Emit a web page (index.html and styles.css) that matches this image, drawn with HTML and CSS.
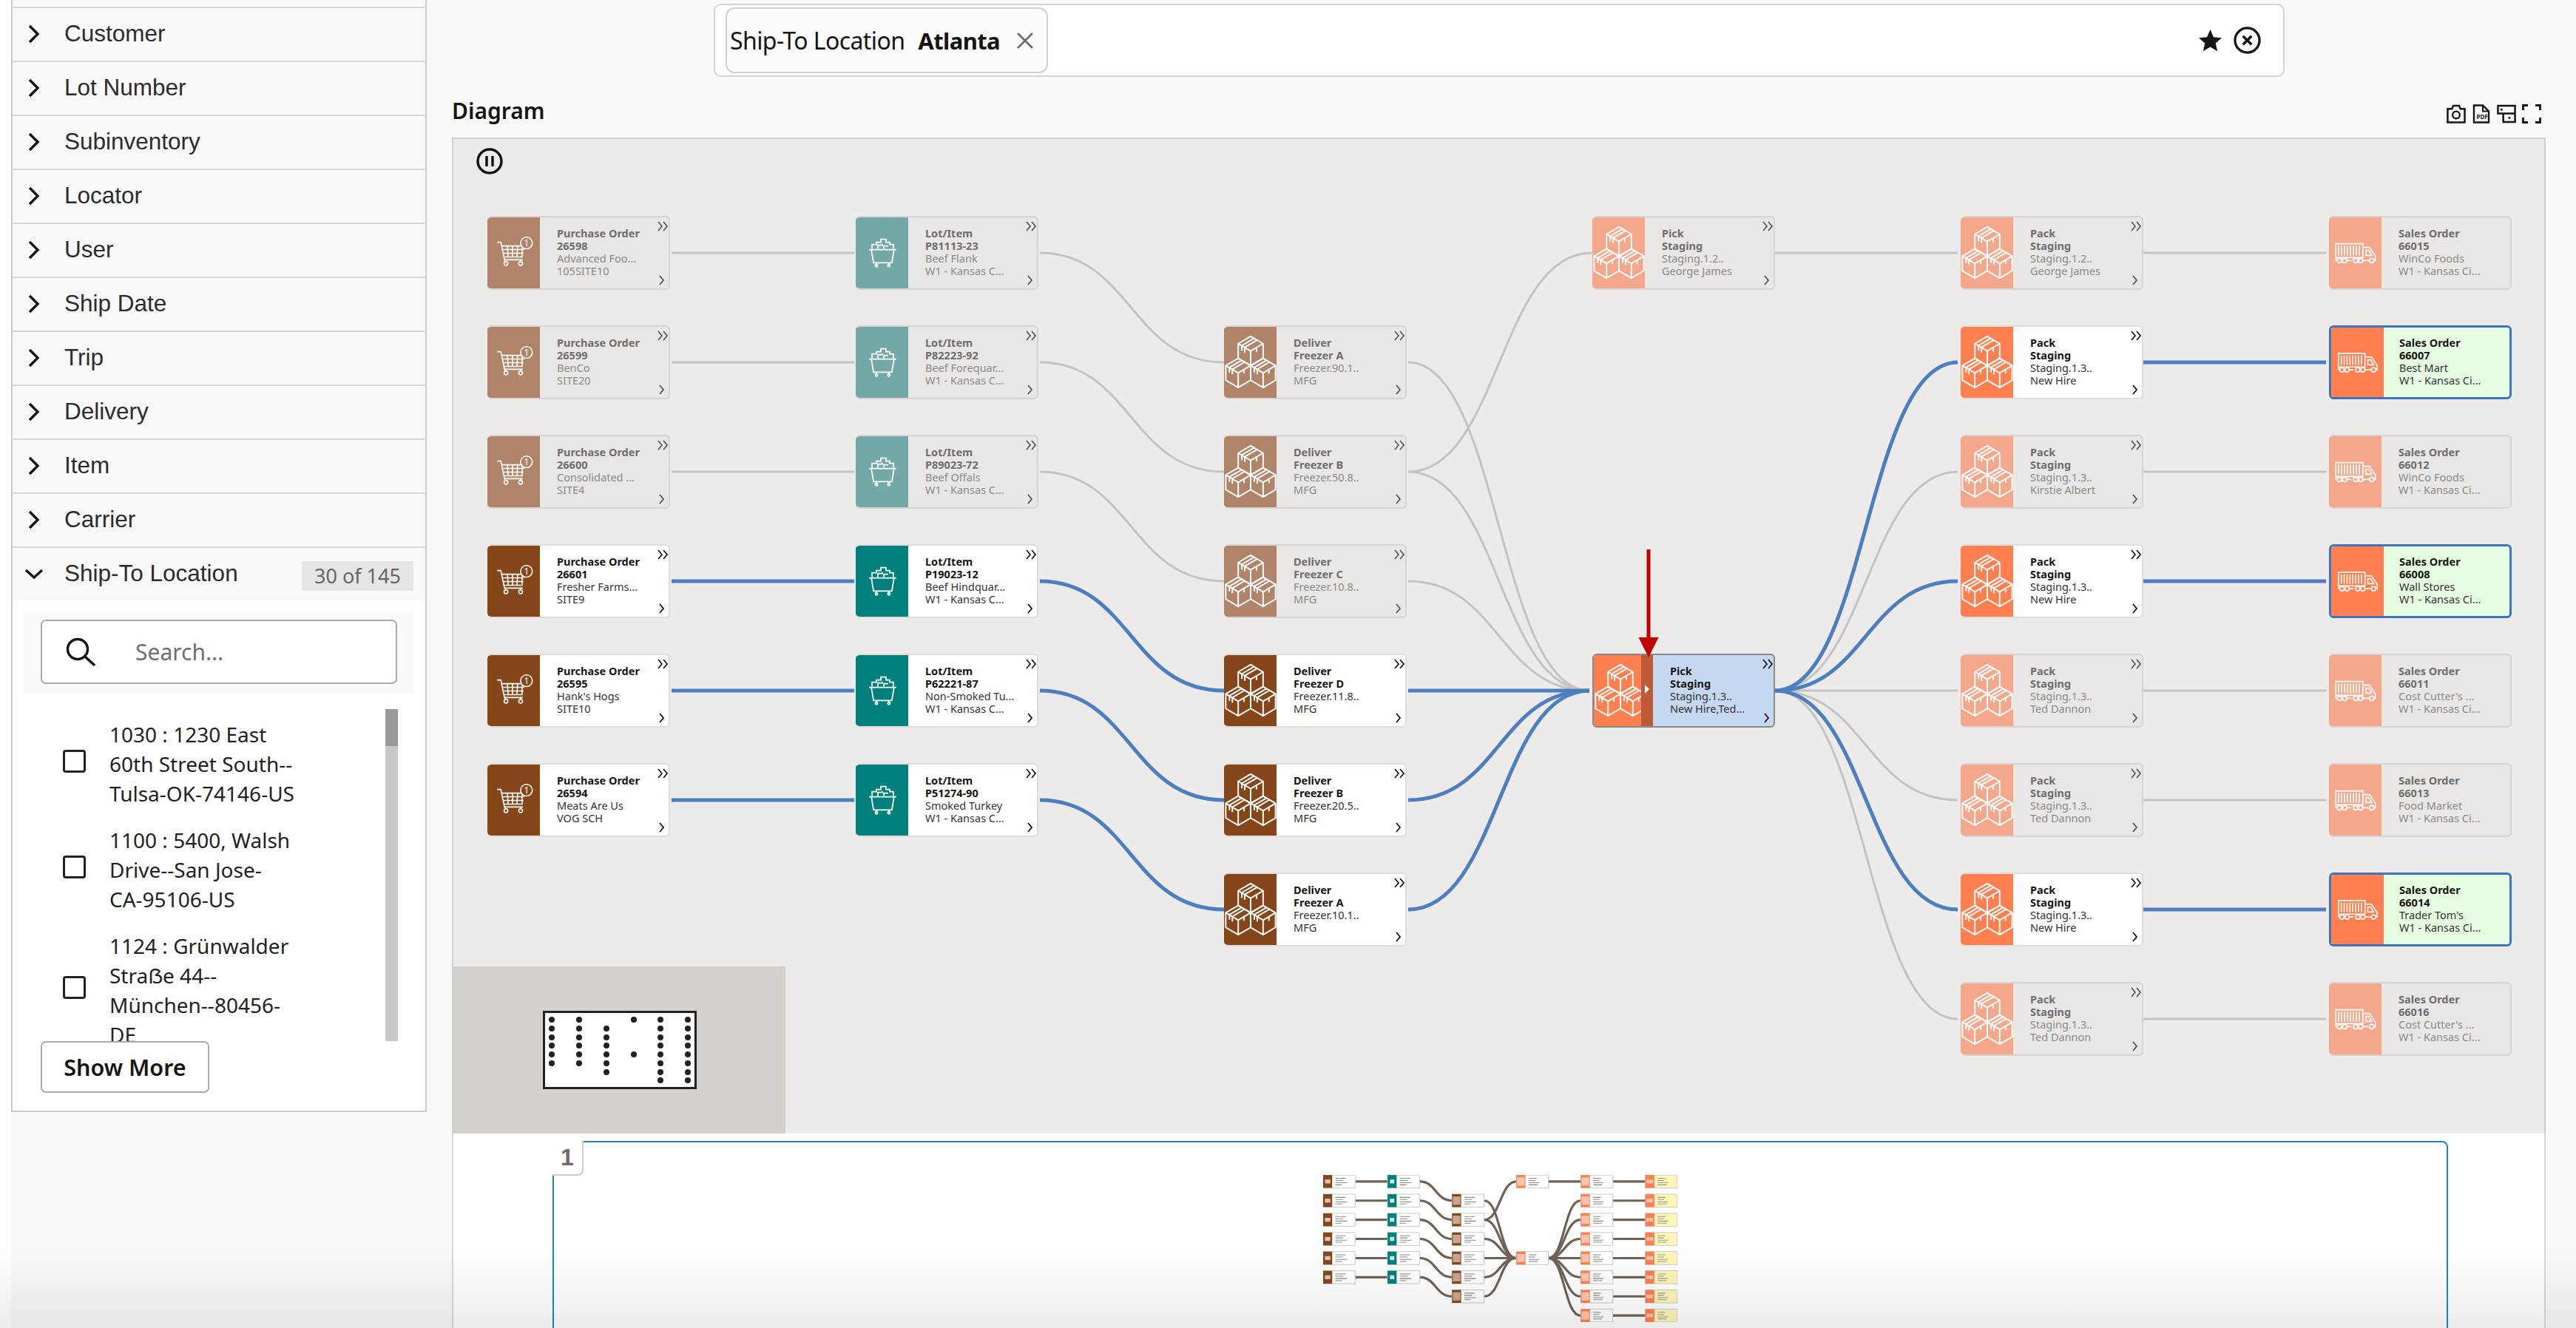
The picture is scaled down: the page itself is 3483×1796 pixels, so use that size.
FILE: index.html
```html
<!DOCTYPE html>
<html lang="en">
<head>
  <meta charset="UTF-8" />
  <title>Diagram</title>
  <link rel="stylesheet" href="styles.css">
</head>
<body>
  <!-- shared icons -->
  <svg class="defs" width="0" height="0">
    <defs>
      <symbol id="i-cart" viewBox="0 0 71 97">
        <g fill="none" stroke="#fff" stroke-width="1.6">
          <path d="M13 34h5l5 24h25"/>
          <path d="M19 39h28v15H22M20 44h30M21 49h28M27 39l1 15M34 39v15M41 39l-1 15"/>
          <path d="M23 58l2 3M46 58l-2 3"/>
          <circle cx="25" cy="63" r="2.6"/><circle cx="45" cy="63" r="2.6"/>
          <circle cx="53" cy="35" r="8" fill="var(--tile)"/>
        </g>
        <text x="53" y="39.5" class="cart-n">1</text>
      </symbol>
      <symbol id="i-bin" viewBox="0 0 71 97">
        <g fill="none" stroke="#fff" stroke-width="1.8">
          <path d="M18 44h37M21 44l3 18h25l3-18M28 62v3M45 62v3"/>
          <circle cx="28" cy="66" r="1.6"/><circle cx="45" cy="66" r="1.6"/>
          <path d="M22 43v-6h6v-3h6v-4h7v4h5v3h5v6M30 43v-5h6v-2M38 43v-4h6"/>
        </g>
      </symbol>
      <g id="cube" fill="none" stroke="#fff" stroke-width="2" stroke-linejoin="round">
        <path d="M0 0l17 10v20L0 40l-17-10V10zM-17 10L0 20l17-10M0 20v20"/>
        <path d="M9 5L-8 15v7M5 2.500L-12 12.500v7M8 15v6"/>
      </g>
      <symbol id="i-boxes" viewBox="0 0 71 97">
        <use href="#cube" x="36" y="13"/>
        <use href="#cube" x="19" y="43"/>
        <use href="#cube" x="53" y="43"/>
      </symbol>
      <symbol id="i-truck" viewBox="0 0 71 97">
        <g fill="none" stroke="#fff" stroke-width="1.7">
          <path d="M9 36h37v19H9zM13 39v13M17 39v13M21 39v13M25 39v13M29 39v13M33 39v13M37 39v13M41 39v13"/>
          <path d="M9 59V55M46 59h8M47 41h8l8 12v6h-2M50 45h4l4 7h-8z"/>
          <path d="M24 59h6M9 59h1"/>
          <circle cx="14" cy="59" r="3"/><circle cx="21" cy="59" r="3"/><circle cx="36" cy="59" r="3"/><circle cx="43" cy="59" r="3"/><circle cx="58" cy="59" r="3"/>
        </g>
      </symbol>
      <symbol id="i-dbl" viewBox="0 0 16 14">
        <path d="M2 1l5 6-5 6M9 1l5 6-5 6" fill="none" stroke="currentColor" stroke-width="1.7"/>
      </symbol>
      <symbol id="i-one" viewBox="0 0 10 14">
        <path d="M2 1l5 6-5 6" fill="none" stroke="currentColor" stroke-width="1.8"/>
      </symbol>
      <symbol id="i-chev" viewBox="0 0 16 26">
        <path d="M2 2l11 11L2 24" fill="none" stroke="#161513" stroke-width="3.4"/>
      </symbol>

      <!-- links, drawn in canvas coordinates -->
      <g id="l-gray">
        <path d="M249 50H496"/><path d="M249 198H496"/><path d="M249 346H496"/>
        <path d="M747 50C870 50 870 198 996 198"/><path d="M747 198C870 198 870 346 996 346"/><path d="M747 346C870 346 870 494 996 494"/>
        <path d="M1245 198C1368 198 1368 642 1490 642"/><path d="M1245 346C1368 346 1368 642 1490 642"/><path d="M1245 494C1368 494 1368 642 1490 642"/>
        <path d="M1245 346C1368 346 1368 50 1493 50"/>
        <path d="M1741 50H1988"/><path d="M2239 50H2486"/>
        <path d="M1741 642C1864 642 1864 346 1988 346"/><path d="M1741 642H1988"/><path d="M1741 642C1864 642 1864 790 1988 790"/><path d="M1741 642C1864 642 1864 1086 1988 1086"/>
        <path d="M2239 346H2486"/><path d="M2239 642H2486"/><path d="M2239 790H2486"/><path d="M2239 1086H2486"/>
      </g>
      <g id="l-blue">
        <path d="M249 494H496"/><path d="M249 642H496"/><path d="M249 790H496"/>
        <path d="M747 494C870 494 870 642 996 642"/><path d="M747 642C870 642 870 790 996 790"/><path d="M747 790C870 790 870 938 996 938"/>
        <path d="M1245 642H1490"/><path d="M1245 790C1368 790 1368 642 1490 642"/><path d="M1245 938C1368 938 1368 642 1490 642"/>
        <path d="M1741 642C1864 642 1864 198 1988 198"/><path d="M1741 642C1864 642 1864 494 1988 494"/><path d="M1741 642C1864 642 1864 938 1988 938"/>
        <path d="M2239 198H2486"/><path d="M2239 494H2486"/><path d="M2239 938H2486"/>
      </g>
    </defs>
  </svg>

  <div class="page">
    <!-- Filters -->
    <aside class="filters">
      <div class="filter"><svg class="chev"><use href="#i-chev"/></svg><span>Customer</span></div>
      <div class="filter"><svg class="chev"><use href="#i-chev"/></svg><span>Lot Number</span></div>
      <div class="filter"><svg class="chev"><use href="#i-chev"/></svg><span>Subinventory</span></div>
      <div class="filter"><svg class="chev"><use href="#i-chev"/></svg><span>Locator</span></div>
      <div class="filter"><svg class="chev"><use href="#i-chev"/></svg><span>User</span></div>
      <div class="filter"><svg class="chev"><use href="#i-chev"/></svg><span>Ship Date</span></div>
      <div class="filter"><svg class="chev"><use href="#i-chev"/></svg><span>Trip</span></div>
      <div class="filter"><svg class="chev"><use href="#i-chev"/></svg><span>Delivery</span></div>
      <div class="filter"><svg class="chev"><use href="#i-chev"/></svg><span>Item</span></div>
      <div class="filter"><svg class="chev"><use href="#i-chev"/></svg><span>Carrier</span></div>
      <div class="filter open">
        <svg class="chev-down" viewBox="0 0 26 16"><path d="M2 3l11 10L24 3" fill="none" stroke="#161513" stroke-width="3.4"/></svg>
        <span>Ship-To Location</span>
        <span class="count">30 of 145</span>
      </div>
      <div class="filter-body">
        <div class="search-wrap">
          <div class="search">
            <svg viewBox="0 0 40 40"><circle cx="16" cy="16" r="13.5" fill="none" stroke="#161513" stroke-width="3.4"/><path d="M26 26l13 12" stroke="#161513" stroke-width="3.4"/></svg>
            <span>Search...</span>
          </div>
        </div>
        <div class="list-wrap">
          <ul class="list">
            <li><i class="check"></i><span>1030 : 1230 East<br>60th Street South--<br>Tulsa-OK-74146-US</span></li>
            <li><i class="check"></i><span>1100 : 5400, Walsh<br>Drive--San Jose-<br>CA-95106-US</span></li>
            <li><i class="check"></i><span>1124 : Grünwalder<br>Straẞe 44--<br>München--80456-<br>DE</span></li>
          </ul>
          <div class="scroll"><div class="thumb"></div></div>
        </div>
        <button class="more">Show More</button>
      </div>
    </aside>

    <main class="content">
      <!-- Applied filter -->
      <div class="applied">
        <div class="chip">
          <span>Ship-To Location</span><b>Atlanta</b>
          <svg viewBox="0 0 24 24"><path d="M2 2l20 20M22 2L2 22" stroke="#6b6b6b" stroke-width="2.6"/></svg>
        </div>
        <div class="applied-tools">
          <svg class="star" viewBox="0 0 32 32"><path d="M16 1l4.6 10.6 11.4 1-8.6 7.5 2.6 11.2L16 25.4 6 31.3l2.6-11.2L0 12.6l11.4-1z" fill="#161513"/></svg>
          <svg class="clear" viewBox="0 0 38 38"><circle cx="19" cy="19" r="17" fill="none" stroke="#161513" stroke-width="3.4"/><path d="M13 13l12 12M25 13L13 25" stroke="#161513" stroke-width="3.6"/></svg>
        </div>
      </div>

      <div class="head">
        <h2>Diagram</h2>
        <div class="tools">
          <svg viewBox="0 0 27 27"><path d="M1.5 6.5h6l2-4.5h8l2 4.5h6v19h-24z" fill="none" stroke="#161513" stroke-width="2.6"/><circle cx="13.5" cy="15" r="5" fill="none" stroke="#161513" stroke-width="2.4"/></svg>
          <svg viewBox="0 0 23 26"><path d="M1.5 1.5h12l8 8v15h-20z" fill="none" stroke="#161513" stroke-width="2.4"/><path d="M13.5 1.5v8h8" fill="none" stroke="#161513" stroke-width="2"/><text x="5" y="20" class="pdf">PDF</text></svg>
          <svg viewBox="0 0 27 26"><path d="M1.5 1.5h24v11h-24zM9 12.500h16.500v12H9z" fill="none" stroke="#161513" stroke-width="2.6"/><path d="M5 7h3M16 18.500h3" stroke="#161513" stroke-width="2.4"/></svg>
          <svg viewBox="0 0 26 26"><path d="M8 1.500H1.500V8M18 1.500h6.500V8M8 24.500H1.500V18M18 24.500h6.500V18" fill="none" stroke="#161513" stroke-width="2.8"/></svg>
        </div>
      </div>

      <section class="panel">
        <svg class="pause" viewBox="0 0 36 36"><circle cx="18" cy="18" r="16" fill="none" stroke="#111" stroke-width="3.4"/><path d="M14 11v14M22 11v14" stroke="#111" stroke-width="3.4"/></svg>

        <div class="canvas">
          <svg class="links">
            <use href="#l-gray" class="l-g"/>
            <use href="#l-blue" class="l-b"/>
          </svg>

          <!-- Purchase orders -->
          <div class="node po faded c1 r1"><svg class="tile"><use href="#i-cart"/></svg><div class="txt"><b>Purchase Order</b><b>26598</b><span>Advanced Foo...</span><span>105SITE10</span></div><svg class="dbl"><use href="#i-dbl"/></svg><svg class="one"><use href="#i-one"/></svg></div>
          <div class="node po faded c1 r2"><svg class="tile"><use href="#i-cart"/></svg><div class="txt"><b>Purchase Order</b><b>26599</b><span>BenCo</span><span>SITE20</span></div><svg class="dbl"><use href="#i-dbl"/></svg><svg class="one"><use href="#i-one"/></svg></div>
          <div class="node po faded c1 r3"><svg class="tile"><use href="#i-cart"/></svg><div class="txt"><b>Purchase Order</b><b>26600</b><span>Consolidated ...</span><span>SITE4</span></div><svg class="dbl"><use href="#i-dbl"/></svg><svg class="one"><use href="#i-one"/></svg></div>
          <div class="node po c1 r4"><svg class="tile"><use href="#i-cart"/></svg><div class="txt"><b>Purchase Order</b><b>26601</b><span>Fresher Farms...</span><span>SITE9</span></div><svg class="dbl"><use href="#i-dbl"/></svg><svg class="one"><use href="#i-one"/></svg></div>
          <div class="node po c1 r5"><svg class="tile"><use href="#i-cart"/></svg><div class="txt"><b>Purchase Order</b><b>26595</b><span>Hank's Hogs</span><span>SITE10</span></div><svg class="dbl"><use href="#i-dbl"/></svg><svg class="one"><use href="#i-one"/></svg></div>
          <div class="node po c1 r6"><svg class="tile"><use href="#i-cart"/></svg><div class="txt"><b>Purchase Order</b><b>26594</b><span>Meats Are Us</span><span>VOG SCH</span></div><svg class="dbl"><use href="#i-dbl"/></svg><svg class="one"><use href="#i-one"/></svg></div>

          <!-- Lots -->
          <div class="node lot faded c2 r1"><svg class="tile"><use href="#i-bin"/></svg><div class="txt"><b>Lot/Item</b><b>P81113-23</b><span>Beef Flank</span><span>W1 - Kansas C...</span></div><svg class="dbl"><use href="#i-dbl"/></svg><svg class="one"><use href="#i-one"/></svg></div>
          <div class="node lot faded c2 r2"><svg class="tile"><use href="#i-bin"/></svg><div class="txt"><b>Lot/Item</b><b>P82223-92</b><span>Beef Forequar...</span><span>W1 - Kansas C...</span></div><svg class="dbl"><use href="#i-dbl"/></svg><svg class="one"><use href="#i-one"/></svg></div>
          <div class="node lot faded c2 r3"><svg class="tile"><use href="#i-bin"/></svg><div class="txt"><b>Lot/Item</b><b>P89023-72</b><span>Beef Offals</span><span>W1 - Kansas C...</span></div><svg class="dbl"><use href="#i-dbl"/></svg><svg class="one"><use href="#i-one"/></svg></div>
          <div class="node lot c2 r4"><svg class="tile"><use href="#i-bin"/></svg><div class="txt"><b>Lot/Item</b><b>P19023-12</b><span>Beef Hindquar...</span><span>W1 - Kansas C...</span></div><svg class="dbl"><use href="#i-dbl"/></svg><svg class="one"><use href="#i-one"/></svg></div>
          <div class="node lot c2 r5"><svg class="tile"><use href="#i-bin"/></svg><div class="txt"><b>Lot/Item</b><b>P62221-87</b><span>Non-Smoked Tu...</span><span>W1 - Kansas C...</span></div><svg class="dbl"><use href="#i-dbl"/></svg><svg class="one"><use href="#i-one"/></svg></div>
          <div class="node lot c2 r6"><svg class="tile"><use href="#i-bin"/></svg><div class="txt"><b>Lot/Item</b><b>P51274-90</b><span>Smoked Turkey</span><span>W1 - Kansas C...</span></div><svg class="dbl"><use href="#i-dbl"/></svg><svg class="one"><use href="#i-one"/></svg></div>

          <!-- Deliveries -->
          <div class="node dlv faded c3 r2"><svg class="tile"><use href="#i-boxes"/></svg><div class="txt"><b>Deliver</b><b>Freezer A</b><span>Freezer.90.1..</span><span>MFG</span></div><svg class="dbl"><use href="#i-dbl"/></svg><svg class="one"><use href="#i-one"/></svg></div>
          <div class="node dlv faded c3 r3"><svg class="tile"><use href="#i-boxes"/></svg><div class="txt"><b>Deliver</b><b>Freezer B</b><span>Freezer.50.8..</span><span>MFG</span></div><svg class="dbl"><use href="#i-dbl"/></svg><svg class="one"><use href="#i-one"/></svg></div>
          <div class="node dlv faded c3 r4"><svg class="tile"><use href="#i-boxes"/></svg><div class="txt"><b>Deliver</b><b>Freezer C</b><span>Freezer.10.8..</span><span>MFG</span></div><svg class="dbl"><use href="#i-dbl"/></svg><svg class="one"><use href="#i-one"/></svg></div>
          <div class="node dlv c3 r5"><svg class="tile"><use href="#i-boxes"/></svg><div class="txt"><b>Deliver</b><b>Freezer D</b><span>Freezer.11.8..</span><span>MFG</span></div><svg class="dbl"><use href="#i-dbl"/></svg><svg class="one"><use href="#i-one"/></svg></div>
          <div class="node dlv c3 r6"><svg class="tile"><use href="#i-boxes"/></svg><div class="txt"><b>Deliver</b><b>Freezer B</b><span>Freezer.20.5..</span><span>MFG</span></div><svg class="dbl"><use href="#i-dbl"/></svg><svg class="one"><use href="#i-one"/></svg></div>
          <div class="node dlv c3 r7"><svg class="tile"><use href="#i-boxes"/></svg><div class="txt"><b>Deliver</b><b>Freezer A</b><span>Freezer.10.1..</span><span>MFG</span></div><svg class="dbl"><use href="#i-dbl"/></svg><svg class="one"><use href="#i-one"/></svg></div>

          <!-- Pick -->
          <div class="node org faded c4 r1"><svg class="tile"><use href="#i-boxes"/></svg><div class="txt"><b>Pick</b><b>Staging</b><span>Staging.1.2..</span><span>George James</span></div><svg class="dbl"><use href="#i-dbl"/></svg><svg class="one"><use href="#i-one"/></svg></div>
          <div class="node org picked c4 r5"><svg class="tile"><use href="#i-boxes"/></svg><div class="divider"></div><div class="txt"><b>Pick</b><b>Staging</b><span>Staging.1.3..</span><span>New Hire,Ted...</span></div><svg class="dbl"><use href="#i-dbl"/></svg><svg class="one"><use href="#i-one"/></svg></div>

          <!-- Pack -->
          <div class="node org faded c5 r1"><svg class="tile"><use href="#i-boxes"/></svg><div class="txt"><b>Pack</b><b>Staging</b><span>Staging.1.2..</span><span>George James</span></div><svg class="dbl"><use href="#i-dbl"/></svg><svg class="one"><use href="#i-one"/></svg></div>
          <div class="node org c5 r2"><svg class="tile"><use href="#i-boxes"/></svg><div class="txt"><b>Pack</b><b>Staging</b><span>Staging.1.3..</span><span>New Hire</span></div><svg class="dbl"><use href="#i-dbl"/></svg><svg class="one"><use href="#i-one"/></svg></div>
          <div class="node org faded c5 r3"><svg class="tile"><use href="#i-boxes"/></svg><div class="txt"><b>Pack</b><b>Staging</b><span>Staging.1.3..</span><span>Kirstie Albert</span></div><svg class="dbl"><use href="#i-dbl"/></svg><svg class="one"><use href="#i-one"/></svg></div>
          <div class="node org c5 r4"><svg class="tile"><use href="#i-boxes"/></svg><div class="txt"><b>Pack</b><b>Staging</b><span>Staging.1.3..</span><span>New Hire</span></div><svg class="dbl"><use href="#i-dbl"/></svg><svg class="one"><use href="#i-one"/></svg></div>
          <div class="node org faded c5 r5"><svg class="tile"><use href="#i-boxes"/></svg><div class="txt"><b>Pack</b><b>Staging</b><span>Staging.1.3..</span><span>Ted Dannon</span></div><svg class="dbl"><use href="#i-dbl"/></svg><svg class="one"><use href="#i-one"/></svg></div>
          <div class="node org faded c5 r6"><svg class="tile"><use href="#i-boxes"/></svg><div class="txt"><b>Pack</b><b>Staging</b><span>Staging.1.3..</span><span>Ted Dannon</span></div><svg class="dbl"><use href="#i-dbl"/></svg><svg class="one"><use href="#i-one"/></svg></div>
          <div class="node org c5 r7"><svg class="tile"><use href="#i-boxes"/></svg><div class="txt"><b>Pack</b><b>Staging</b><span>Staging.1.3..</span><span>New Hire</span></div><svg class="dbl"><use href="#i-dbl"/></svg><svg class="one"><use href="#i-one"/></svg></div>
          <div class="node org faded c5 r8"><svg class="tile"><use href="#i-boxes"/></svg><div class="txt"><b>Pack</b><b>Staging</b><span>Staging.1.3..</span><span>Ted Dannon</span></div><svg class="dbl"><use href="#i-dbl"/></svg><svg class="one"><use href="#i-one"/></svg></div>

          <!-- Sales orders -->
          <div class="node org faded c6 r1"><svg class="tile"><use href="#i-truck"/></svg><div class="txt"><b>Sales Order</b><b>66015</b><span>WinCo Foods</span><span>W1 - Kansas Ci...</span></div></div>
          <div class="node org match c6 r2"><svg class="tile"><use href="#i-truck"/></svg><div class="txt"><b>Sales Order</b><b>66007</b><span>Best Mart</span><span>W1 - Kansas Ci...</span></div></div>
          <div class="node org faded c6 r3"><svg class="tile"><use href="#i-truck"/></svg><div class="txt"><b>Sales Order</b><b>66012</b><span>WinCo Foods</span><span>W1 - Kansas Ci...</span></div></div>
          <div class="node org match c6 r4"><svg class="tile"><use href="#i-truck"/></svg><div class="txt"><b>Sales Order</b><b>66008</b><span>Wall Stores</span><span>W1 - Kansas Ci...</span></div></div>
          <div class="node org faded c6 r5"><svg class="tile"><use href="#i-truck"/></svg><div class="txt"><b>Sales Order</b><b>66011</b><span>Cost Cutter's ...</span><span>W1 - Kansas Ci...</span></div></div>
          <div class="node org faded c6 r6"><svg class="tile"><use href="#i-truck"/></svg><div class="txt"><b>Sales Order</b><b>66013</b><span>Food Market</span><span>W1 - Kansas Ci...</span></div></div>
          <div class="node org match c6 r7"><svg class="tile"><use href="#i-truck"/></svg><div class="txt"><b>Sales Order</b><b>66014</b><span>Trader Tom's</span><span>W1 - Kansas Ci...</span></div></div>
          <div class="node org faded c6 r8"><svg class="tile"><use href="#i-truck"/></svg><div class="txt"><b>Sales Order</b><b>66016</b><span>Cost Cutter's ...</span><span>W1 - Kansas Ci...</span></div></div>

          <!-- Selection arrow -->
          <svg class="arrow" viewBox="0 0 28 146"><path d="M11.500 0h5v119h11L14 146 .5 119h11z" fill="#c00000"/></svg>
        </div>

        <!-- Minimap -->
        <div class="minimap">
          <svg viewBox="0 0 208 106">
            <rect x="1.500" y="1.500" width="205" height="103" fill="#fff" stroke="#222" stroke-width="3"/>
            <g fill="#222">
              <ellipse cx="12" cy="12" rx="4" ry="4"/><ellipse cx="12" cy="24" rx="4" ry="4"/><ellipse cx="12" cy="36" rx="4" ry="4"/><ellipse cx="12" cy="47" rx="4" ry="4"/><ellipse cx="12" cy="59" rx="4" ry="4"/><ellipse cx="12" cy="71" rx="4" ry="4"/>
              <ellipse cx="49" cy="12" rx="4" ry="4"/><ellipse cx="49" cy="24" rx="4" ry="4"/><ellipse cx="49" cy="36" rx="4" ry="4"/><ellipse cx="49" cy="47" rx="4" ry="4"/><ellipse cx="49" cy="59" rx="4" ry="4"/><ellipse cx="49" cy="71" rx="4" ry="4"/>
              <ellipse cx="86" cy="24" rx="4" ry="4"/><ellipse cx="86" cy="36" rx="4" ry="4"/><ellipse cx="86" cy="47" rx="4" ry="4"/><ellipse cx="86" cy="59" rx="4" ry="4"/><ellipse cx="86" cy="71" rx="4" ry="4"/><ellipse cx="86" cy="83" rx="4" ry="4"/>
              <ellipse cx="123" cy="12" rx="4" ry="4"/><ellipse cx="123" cy="59" rx="4" ry="4"/>
              <ellipse cx="159" cy="12" rx="4" ry="4"/><ellipse cx="159" cy="24" rx="4" ry="4"/><ellipse cx="159" cy="36" rx="4" ry="4"/><ellipse cx="159" cy="47" rx="4" ry="4"/><ellipse cx="159" cy="59" rx="4" ry="4"/><ellipse cx="159" cy="71" rx="4" ry="4"/><ellipse cx="159" cy="83" rx="4" ry="4"/><ellipse cx="159" cy="94" rx="4" ry="4"/>
              <ellipse cx="196" cy="12" rx="4" ry="4"/><ellipse cx="196" cy="24" rx="4" ry="4"/><ellipse cx="196" cy="36" rx="4" ry="4"/><ellipse cx="196" cy="47" rx="4" ry="4"/><ellipse cx="196" cy="59" rx="4" ry="4"/><ellipse cx="196" cy="71" rx="4" ry="4"/><ellipse cx="196" cy="83" rx="4" ry="4"/><ellipse cx="196" cy="94" rx="4" ry="4"/>
            </g>
          </svg>
        </div>
      </section>

      <!-- Overview tree -->
      <section class="tree-area">
        <div class="tree">
          <div class="tab">1</div>
          <svg class="thumb-svg" viewBox="0 0 2737 1136">
            <defs>
              <g id="t-brown"><rect width="247" height="100" fill="#fff" stroke="#ccc" stroke-width="6"/><rect width="70" height="100" fill="#85471a"/><path d="M14 35h42v30H14z" fill="#d9c5b5"/><path d="M95 25h80M95 42h60M95 60h90M95 76h50" stroke="#888" stroke-width="6"/></g>
              <g id="t-teal"><rect width="247" height="100" fill="#fff" stroke="#ccc" stroke-width="6"/><rect width="70" height="100" fill="#00807c"/><path d="M18 35h34v30H18z" fill="#d0e8e6"/><path d="M95 25h80M95 42h60M95 60h90M95 76h50" stroke="#888" stroke-width="6"/></g>
              <g id="t-box"><rect width="247" height="100" fill="#fff" stroke="#ccc" stroke-width="6"/><rect width="70" height="100" fill="#85471a"/><path d="M6 18h58v64H6z" fill="#c8a78f"/><path d="M95 25h80M95 42h60M95 60h90M95 76h50" stroke="#888" stroke-width="6"/></g>
              <g id="t-org"><rect width="247" height="100" fill="#fff" stroke="#ccc" stroke-width="6"/><rect width="70" height="100" fill="#ff7f50"/><path d="M6 18h58v64H6z" fill="#ffc4ad"/><path d="M95 25h60M95 42h50M95 60h80M95 76h70" stroke="#888" stroke-width="6"/></g>
              <g id="t-so"><rect width="247" height="100" fill="#fdf6b4" stroke="#ccc" stroke-width="6"/><rect width="70" height="100" fill="#ff7f50"/><path d="M10 36h50v28H10z" fill="#ffc4ad"/><path d="M95 25h60M95 42h50M95 60h80M95 76h70" stroke="#999" stroke-width="6"/></g>
            </defs>
            <use href="#l-gray" class="l-t"/>
            <use href="#l-blue" class="l-t"/>
            <use href="#t-brown" x="0" y="0"/><use href="#t-brown" x="0" y="148"/><use href="#t-brown" x="0" y="296"/><use href="#t-brown" x="0" y="444"/><use href="#t-brown" x="0" y="592"/><use href="#t-brown" x="0" y="740"/>
            <use href="#t-teal" x="498" y="0"/><use href="#t-teal" x="498" y="148"/><use href="#t-teal" x="498" y="296"/><use href="#t-teal" x="498" y="444"/><use href="#t-teal" x="498" y="592"/><use href="#t-teal" x="498" y="740"/>
            <use href="#t-box" x="996" y="148"/><use href="#t-box" x="996" y="296"/><use href="#t-box" x="996" y="444"/><use href="#t-box" x="996" y="592"/><use href="#t-box" x="996" y="740"/><use href="#t-box" x="996" y="888"/>
            <use href="#t-org" x="1493" y="0"/><use href="#t-org" x="1493" y="592"/>
            <use href="#t-org" x="1991" y="0"/><use href="#t-org" x="1991" y="148"/><use href="#t-org" x="1991" y="296"/><use href="#t-org" x="1991" y="444"/><use href="#t-org" x="1991" y="592"/><use href="#t-org" x="1991" y="740"/><use href="#t-org" x="1991" y="888"/><use href="#t-org" x="1991" y="1036"/>
            <use href="#t-so" x="2489" y="0"/><use href="#t-so" x="2489" y="148"/><use href="#t-so" x="2489" y="296"/><use href="#t-so" x="2489" y="444"/><use href="#t-so" x="2489" y="592"/><use href="#t-so" x="2489" y="740"/><use href="#t-so" x="2489" y="888"/><use href="#t-so" x="2489" y="1036"/>
          </svg>
        </div>
      </section>
    </main>
  </div>
  <div class="fade"></div>
</body>
</html>
```

FILE: styles.css
```css
/* Page frame */
* { box-sizing: border-box; }
html, body { margin: 0; height: 1796px; overflow: hidden; }
body {
  background: #fff;
  color: #161513;
  font-family: "Noto Sans", "Open Sans", sans-serif;
  position: relative;
}
.defs { position: absolute; }
.page {
  margin-left: 15px;
  height: 1796px;
  background: #faf9f7;
  display: flex;
  gap: 34px;
}

/* Filters */
.filters {
  width: 562px;
  flex: none;
  align-self: flex-start;
  padding-top: 9px;
  background: #f9f9f9;
  border: solid #ccc;
  border-width: 0 2px 2px 2px;
  font-family: "Liberation Sans", Arial, sans-serif;
}
.filter {
  height: 73px;
  display: flex;
  align-items: center;
  padding-left: 21px;
  padding-bottom: 2px;
  border-top: 2px solid #d8d8d8;
  font-size: 31.5px;
  color: #2c2c2c;
}
.filter > span:first-of-type { margin-left: 33px; }
.chev { width: 16px; height: 26px; }
.chev-down { width: 26px; height: 16px; margin-left: -5px; margin-right: -5px; }
.count {
  margin-left: auto;
  margin-right: 16px;
  margin-top: 6px;
  width: 151px;
  height: 40px;
  background: #e5e5e5;
  color: #666;
  font-family: "Noto Sans", sans-serif;
  font-size: 27px;
  display: flex;
  align-items: center;
  justify-content: center;
}
.filter-body {
  background: #fff;
  height: 690px;
  padding-top: 15px;
  font-family: "Noto Sans", sans-serif;
}
.search-wrap {
  margin: 0 15px;
  padding: 11px 23px;
  background: #fafafa;
  height: 110px;
}
.search {
  height: 87px;
  background: #fff;
  border: 2px solid #aaa;
  border-radius: 7px;
  display: flex;
  align-items: center;
  padding-left: 32px;
  font-size: 30px;
  color: #6f6f6f;
}
.search svg { width: 40px; height: 40px; margin-right: 54px; }
.list-wrap {
  height: 449px;
  margin-top: 22px;
  position: relative;
  overflow: hidden;
}
.list {
  list-style: none;
  margin: 0;
  padding: 14px 0 0 0;
}
.list li {
  display: flex;
  align-items: center;
  padding-left: 68px;
  margin-bottom: 23px;
  font-size: 28px;
  line-height: 40px;
  color: #222;
}
.check {
  width: 31px;
  height: 31px;
  border: 3px solid #222;
  border-radius: 4px;
  margin-right: 32px;
  margin-bottom: 7px;
  flex: none;
}
.scroll {
  position: absolute;
  right: 37px;
  top: 0;
  width: 17px;
  height: 100%;
  background: #c8c8c8;
}
.thumb { height: 50px; background: #999; }
.more {
  display: block;
  margin-left: 38px;
  width: 228px;
  height: 70px;
  background: #fff;
  border: 2px solid #aaa;
  border-radius: 7px;
  font-family: "Noto Sans", sans-serif;
  font-size: 30.5px;
  font-weight: 600;
  color: #161513;
  padding: 0;
}

/* Main column */
.content {
  width: 2831px;
  flex: none;
  display: flex;
  flex-direction: column;
}
.applied {
  flex: none;
  margin: 5px 0 0 354px;
  width: 2124px;
  height: 99px;
  background: #fff;
  border: 2px solid #d4d4d4;
  border-radius: 10px;
  display: flex;
  align-items: center;
  justify-content: space-between;
  padding: 0 30px 0 14px;
}
.chip {
  height: 89px;
  width: 436px;
  background: #fcfcfc;
  border: 2px solid #d0d0d0;
  border-radius: 12px;
  display: flex;
  align-items: center;
  padding-left: 4px;
  font-size: 32px;
  letter-spacing: -.6px;
}
.chip b { margin-left: 18px; font-size: 31px; }
.chip svg { width: 24px; height: 24px; margin-left: 22px; }
.applied-tools { display: flex; align-items: center; gap: 16px; }
.star { width: 31px; height: 31px; }
.clear { width: 37px; height: 37px; }
.head {
  flex: none;
  height: 82px;
  display: flex;
  align-items: flex-end;
  justify-content: space-between;
  padding-bottom: 16px;
}
.head h2 {
  margin: 0;
  font-size: 30px;
  font-weight: 600;
  line-height: 40px;
}
.tools { display: flex; gap: 8px; padding-right: 6px; align-items: flex-end; margin-bottom: 3px; }
.tools svg { height: 26px; width: 26px; }

/* Diagram panel */
.panel {
  flex: none;
  height: 1347px;
  background: #ecebe9;
  border: solid #d0d0d0;
  border-width: 2px 2px 0 2px;
  position: relative;
}
.pause {
  position: absolute;
  left: 31px;
  top: 12px;
  width: 36px;
  height: 36px;
}
.canvas {
  position: absolute;
  left: 46px;
  top: 104px;
  display: grid;
  grid-template-columns: repeat(6, 247px);
  grid-template-rows: repeat(8, 100px);
  column-gap: 251px;
  row-gap: 48px;
}
.links {
  position: absolute;
  left: 0;
  top: 0;
  width: 2737px;
  height: 1136px;
  fill: none;
}
.l-g { stroke: #c4c3c1; stroke-width: 3; }
.l-b { stroke: #4d7ec0; stroke-width: 5; }
.l-t { stroke: #6d6256; stroke-width: 18; fill: none; }
.c1 { grid-column: 1; } .c2 { grid-column: 2; } .c3 { grid-column: 3; }
.c4 { grid-column: 4; } .c5 { grid-column: 5; } .c6 { grid-column: 6; }
.r1 { grid-row: 1; } .r2 { grid-row: 2; } .r3 { grid-row: 3; } .r4 { grid-row: 4; }
.r5 { grid-row: 5; } .r6 { grid-row: 6; } .r7 { grid-row: 7; } .r8 { grid-row: 8; }

/* Nodes */
.node {
  position: relative;
  display: flex;
  background: #fff;
  border: 2px solid #dedddc;
  border-left-width: 0;
  border-radius: 6px;
  overflow: hidden;
  color: #161513;
  --tile: #85471a;
}
.po, .dlv { --tile: #85471a; }
.lot { --tile: #00807c; }
.org { --tile: #ff7f50; }
.node.faded { background: #e8e7e6; border-color: #d6d5d3; color: #6e6e6e; }
.faded.po, .faded.dlv { --tile: #b08468; }
.faded.lot { --tile: #72a8a6; }
.faded.org { --tile: #f5a78c; }
.node.match { background: #e6fce0; border-color: #3f74c0; border-width: 3px; }
.node.picked { background: #c5d8ef; border-color: #888; border-left-width: 2px; }
.tile {
  width: 71px;
  height: 100%;
  flex: none;
  background: var(--tile);
}
.divider {
  position: absolute;
  left: 64px;
  top: 0;
  bottom: 0;
  width: 16px;
  background: #bd5b38;
}
.divider::after {
  content: "";
  position: absolute;
  left: 5px;
  top: 40px;
  border-left: 6px solid #fff;
  border-top: 6px solid transparent;
  border-bottom: 6px solid transparent;
}
.txt {
  margin-left: 23px;
  padding-top: 13px;
  display: flex;
  flex-direction: column;
  font-size: 14.500px;
  line-height: 17px;
  white-space: nowrap;
}
.txt b { font-weight: 700; }
.txt span { color: #333; }
.faded .txt span { color: #8a8a8a; }
.picked .txt { margin-left: 32px; }
.match .txt { margin-left: 21px; padding-top: 12px; }
.dbl {
  position: absolute;
  right: 0;
  top: 5px;
  width: 16px;
  height: 14px;
  color: #111;
}
.one {
  position: absolute;
  right: 4px;
  bottom: 4px;
  width: 10px;
  height: 14px;
  color: #111;
}
.faded .dbl, .faded .one { color: #555; }
.arrow {
  position: absolute;
  left: 1556px;
  top: 451px;
  width: 28px;
  height: 146px;
}

/* Minimap */
.minimap {
  position: absolute;
  left: 0;
  bottom: 0;
  width: 449px;
  height: 226px;
  background: #d4d0cb;
  display: flex;
  align-items: center;
  justify-content: center;
}
.minimap svg { width: 208px; height: 106px; }

/* Overview tree */
.tree-area {
  flex: 1;
  min-height: 0;
  background: #fff;
  border: solid #d8d8d8;
  border-width: 0 2px;
  padding: 10px 0 0 134px;
}
.tree {
  width: 2563px;
  height: 300px;
  border: 2px solid #1a87d0;
  border-radius: 8px 8px 0 0;
  position: relative;
  display: flex;
  justify-content: center;
  padding-top: 44px;
}
.tab {
  position: absolute;
  left: -2px;
  top: -2px;
  width: 42px;
  height: 47px;
  border: 2px solid #ccc;
  border-top: 0;
  border-left: 0;
  border-radius: 0 0 8px 0;
  background: #fff;
  color: #6b6b6b;
  font-family: "Liberation Sans", Arial, sans-serif;
  font-weight: 700;
  font-size: 32px;
  display: flex;
  align-items: center;
  justify-content: center;
}
.thumb-svg {
  width: 479px;
  height: 199px;
  filter: blur(.6px);
}
.cart-n, .pdf { font-family: "Noto Sans", sans-serif; }
.cart-n { fill: #fff; font-size: 12px; text-anchor: middle; }
.pdf { fill: #161513; font-size: 8px; font-weight: 700; }

/* Soft fade along the bottom of the shot */
.fade {
  position: absolute;
  left: 0;
  right: 0;
  bottom: 0;
  height: 110px;
  background: linear-gradient(to bottom, rgba(0,0,0,0), rgba(0,0,0,.075));
  pointer-events: none;
}
```
